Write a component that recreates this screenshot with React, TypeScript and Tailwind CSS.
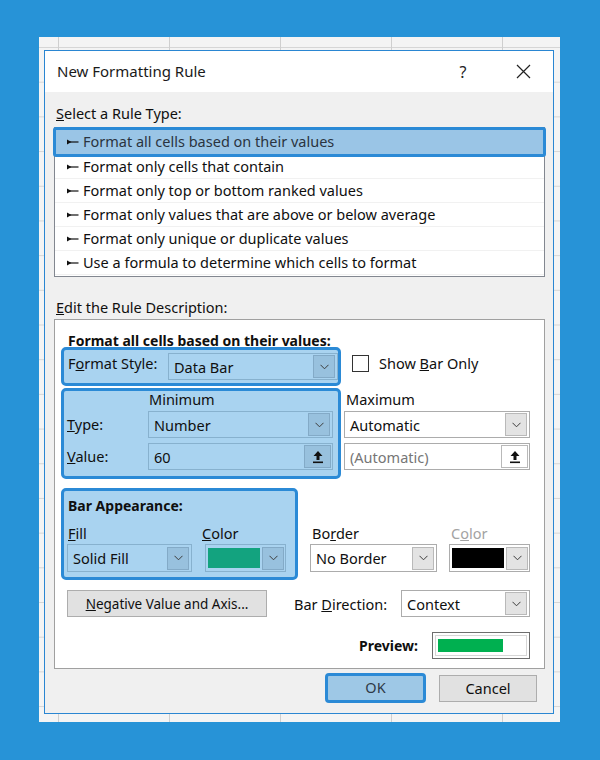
import type { ReactNode } from "react";

// chevron del combo
const Chevron = () => (
  <svg width="9" height="6" viewBox="0 0 9 6">
    <polyline points="0.5,0.8 4.5,4.8 8.5,0.8" fill="none" stroke="#3c3c3c" strokeWidth="1" />
  </svg>
);

// flecha de "collapse" (boton de referencia)
const UpIcon = () => (
  <svg width="12" height="14" viewBox="0 0 12 14">
    <path d="M6 1 L1.5 6 H4.5 V10 H7.5 V6 H10.5 Z" fill="#111" />
    <rect x="1" y="11.5" width="10" height="1.6" fill="#111" />
  </svg>
);

const Bullet = () => (
  <svg width="12" height="6" viewBox="0 0 12 6" className="shrink-0">
    <path d="M0 0.5 L4.5 3 L0 5.5 Z" fill="#111" />
    <rect x="3" y="2.4" width="8.5" height="1.2" fill="#111" />
  </svg>
);

function ArrowBtn({ tinted }: { tinted?: boolean }) {
  return (
    <div
      className={
        tinted
          ? "flex items-center justify-center w-[22px] h-[23px] border border-[#83aac7] bg-[#98c1de]"
          : "flex items-center justify-center w-[22px] h-[23px] border border-[#b9b9b9] bg-[#e3e3e3]"
      }
    >
      <Chevron />
    </div>
  );
}

function Combo({
  text,
  className,
  tinted,
}: {
  text: ReactNode;
  className: string;
  tinted?: boolean;
}) {
  return (
    <div
      className={
        (tinted
          ? "flex items-center justify-between border border-[#87b1ce] pl-[5px] pr-[2px] "
          : "flex items-center justify-between border border-[#acacac] bg-white pl-[5px] pr-[2px] ") + className
      }
    >
      <span className="leading-[18px]">{text}</span>
      <ArrowBtn tinted={tinted} />
    </div>
  );
}

function RefInput({ text, tinted }: { text: ReactNode; tinted?: boolean }) {
  return (
    <div
      className={
        tinted
          ? "flex items-center justify-between w-[185px] h-[27px] border border-[#87b1ce] pl-[5px] pr-[1px]"
          : "flex items-center justify-between w-[186px] h-[27px] border border-[#acacac] bg-white pl-[5px] pr-[1px]"
      }
    >
      <span className={tinted ? "leading-[18px]" : "leading-[18px] text-[#767676]"}>{text}</span>
      <div
        className={
          tinted
            ? "flex items-center justify-center w-[27px] h-[23px] border border-[#83aac7] bg-[#98c1de]"
            : "flex items-center justify-center w-[27px] h-[23px] border border-[#b9b9b9] bg-white"
        }
      >
        <UpIcon />
      </div>
    </div>
  );
}

const ColorCombo = ({ swatch, tinted }: { swatch: string; tinted?: boolean }) => (
  <div
    className={
      tinted
        ? "flex items-center w-[81px] h-[28px] border border-[#87b1ce] pl-[2px] gap-[2px]"
        : "flex items-center w-[81px] h-[28px] border border-[#acacac] bg-white pl-[2px] gap-[2px]"
    }
  >
    <div className={swatch} />
    <ArrowBtn tinted={tinted} />
  </div>
);

const reglas = [
  "Format only cells that contain",
  "Format only top or bottom ranked values",
  "Format only values that are above or below average",
  "Format only unique or duplicate values",
  "Use a formula to determine which cells to format",
];

export default function App() {
  return (
    <div className="w-[600px] h-[760px] bg-[#2793d7] pt-[37px] pl-[39px] font-['Noto_Sans',sans-serif] text-[14.5px] text-[#0f0f0f]">
      {/* hoja de calculo de fondo */}
      <div className="w-[521px] h-[685px] bg-[#f4f4f4] bg-[linear-gradient(to_right,#cfcfcf_1px,transparent_1px),linear-gradient(to_bottom,#d6d6d6_1px,transparent_1px)] bg-[size:111px_34.7px] bg-[position:19px_10px] pt-[13px] pl-[5px]">
        {/* DIALOGO */}
        <div className="w-[510px] h-[664px] border border-[#2a86d2] bg-[#f0f0f0] flex flex-col">
          {/* barra de titulo */}
          <div className="h-[41px] bg-white flex items-center pl-[12px] shrink-0">
            <span className="text-[15px] text-[#1a1a1a]">New Formatting Rule</span>
            <div className="ml-auto flex items-center pr-[10px]">
              <div className="w-[40px] flex justify-center text-[16px] text-[#222]">?</div>
              <div className="w-[40px] ml-[20px] flex justify-center">
                <svg width="15" height="15" viewBox="0 0 15 15">
                  <path d="M1 1 L14 14 M14 1 L1 14" stroke="#222" strokeWidth="1.2" />
                </svg>
              </div>
            </div>
          </div>

          {/* 1. TIPO DE REGLA */}
          <div className="mt-[12px] ml-[11px] leading-[18px]">
            <span className="underline">S</span>elect a Rule Type:
          </div>
          <div className="mt-[5px] ml-[9px] w-[491px] h-[150px] border border-[#828790] bg-white pt-[3px] pb-[1px]">
            <div className="-mx-[2px] -mt-[4px] -mb-[2px] h-[30px] border-[3px] border-[#2b8ad6] bg-[#9ac5e6] rounded-[3px] flex items-center gap-[4px] pl-[11px] text-[#2a3440]">
              <Bullet />
              <span>Format all cells based on their values</span>
            </div>
            {reglas.map((r) => (
              <div key={r} className="h-[24px] flex items-center gap-[4px] pl-[12px] border-b border-[#f1f1f1]">
                <Bullet />
                <span>{r}</span>
              </div>
            ))}
          </div>

          {/* 2. DESCRIPCION */}
          <div className="mt-[21px] ml-[11px] leading-[18px]">
            <span className="underline">E</span>dit the Rule Description:
          </div>
          <div className="mt-[3px] ml-[9px] w-[491px] h-[350px] border border-[#a0a0a0] bg-white flex flex-col shrink-0">
            <div className="ml-[13px] mt-[14px] leading-[13px] font-bold text-[14px]">Format all cells based on their values:</div>

            {/* Format Style */}
            <div className="flex items-start ml-[6px]">
              <div className="w-[280px] h-[39px] border-[3px] border-[#2b8ad6] rounded-[5px] bg-[#a9d3f0] flex items-start">
                <div className="w-[104px] pl-[4px] pt-[4px] leading-[18px]">
                  F<span className="underline">o</span>rmat Style:
                </div>
                <Combo tinted text="Data Bar" className="mt-[3px] w-[170px] h-[27px]" />
              </div>
              <div className="ml-[11px] mt-[7px] flex items-center">
                <div className="w-[17px] h-[17px] border border-[#333] bg-white" />
                <span className="ml-[10px] leading-[18px]">
                  Show <span className="underline">B</span>ar Only
                </span>
              </div>
            </div>

            {/* Minimum / Maximum */}
            <div className="flex items-start ml-[6px] mt-[2px]">
              <div className="w-[280px] h-[91px] border-[3px] border-[#2b8ad6] rounded-[5px] bg-[#a9d3f0] flex flex-col">
                <div className="pl-[85px] leading-[16px]">Minimum</div>
                <div className="flex items-center mt-[4px]">
                  <div className="w-[84px] pl-[3px]">
                    <span className="underline">T</span>ype:
                  </div>
                  <Combo tinted text="Number" className="w-[185px] h-[27px]" />
                </div>
                <div className="flex items-center mt-[5px]">
                  <div className="w-[84px] pl-[3px]">
                    <span className="underline">V</span>alue:
                  </div>
                  <RefInput tinted text="60" />
                </div>
              </div>
              <div className="ml-[3px] w-[186px] flex flex-col">
                <div className="mt-[3px] pl-[2px] leading-[16px]">Maximum</div>
                <Combo text="Automatic" className="mt-[4px] w-[186px] h-[27px]" />
                <div className="mt-[5px]">
                  <RefInput text="(Automatic)" />
                </div>
              </div>
            </div>

            {/* Bar Appearance */}
            <div className="flex items-start ml-[6px] mt-[9px]">
              <div className="w-[237px] h-[92px] border-[3px] border-[#2b8ad6] rounded-[5px] bg-[#a9d3f0] flex flex-col">
                <div className="mt-[6px] pl-[4px] leading-[18px] font-bold text-[14px]">Bar Appearance:</div>
                <div className="flex mt-[9px] leading-[18px]">
                  <div className="w-[138px] pl-[4px]">
                    <span className="underline">F</span>ill
                  </div>
                  <div>
                    <span className="underline">C</span>olor
                  </div>
                </div>
                <div className="flex mt-[2px] pl-[3px]">
                  <Combo tinted text="Solid Fill" className="w-[125px] h-[28px]" />
                  <div className="ml-[13px]">
                    <ColorCombo tinted swatch="w-[52px] h-[20px] bg-[#13a37f]" />
                  </div>
                </div>
              </div>
              <div className="ml-[12px] flex flex-col">
                <div className="mt-[36px] pl-[2px] leading-[18px]">
                  Bo<span className="underline">r</span>der
                </div>
                <Combo text="No Border" className="mt-[2px] w-[127px] h-[28px]" />
              </div>
              <div className="ml-[12px] flex flex-col">
                <div className="mt-[36px] pl-[2px] leading-[18px] text-[#a3a3a3]">
                  C<span className="underline">o</span>lor
                </div>
                <div className="mt-[2px]">
                  <ColorCombo swatch="w-[52px] h-[20px] bg-black" />
                </div>
              </div>
            </div>

            {/* Negative / Direction */}
            <div className="flex items-center mt-[10px]">
              <button className="ml-[12px] w-[200px] h-[27px] border border-[#adadad] bg-[#e1e1e1] leading-[18px] text-[13.5px]">
                <span className="underline">N</span>egative Value and Axis...
              </button>
              <div className="ml-[27px] w-[107px] leading-[18px]">
                Bar <span className="underline">D</span>irection:
              </div>
              <Combo text="Context" className="w-[129px] h-[27px]" />
            </div>

            {/* Preview */}
            <div className="flex items-center justify-end mt-[15px] pr-[14px]">
              <span className="font-bold leading-[18px] text-[14px]">Preview:</span>
              <div className="ml-[14px] w-[98px] h-[27px] border border-[#6e6e6e] bg-white">
                <div className="m-[2px] h-[21px] border border-[#d6d6d6] px-[2px] py-[3px]">
                  <div className="w-[65px] h-[13px] bg-[#00b050]" />
                </div>
              </div>
            </div>
          </div>

          {/* BOTONES */}
          <div className="flex items-center justify-end mt-[4px] pr-[16px] gap-[13px]">
            <div className="w-[101px] h-[30px] border-[3px] border-[#2b8ad6] rounded-[4px] bg-[#9ec8e6] flex items-center justify-center text-[#2f3a46]">
              OK
            </div>
            <button className="w-[98px] h-[27px] border border-[#adadad] bg-[#e1e1e1] leading-[18px]">Cancel</button>
          </div>
        </div>
      </div>
    </div>
  );
}
